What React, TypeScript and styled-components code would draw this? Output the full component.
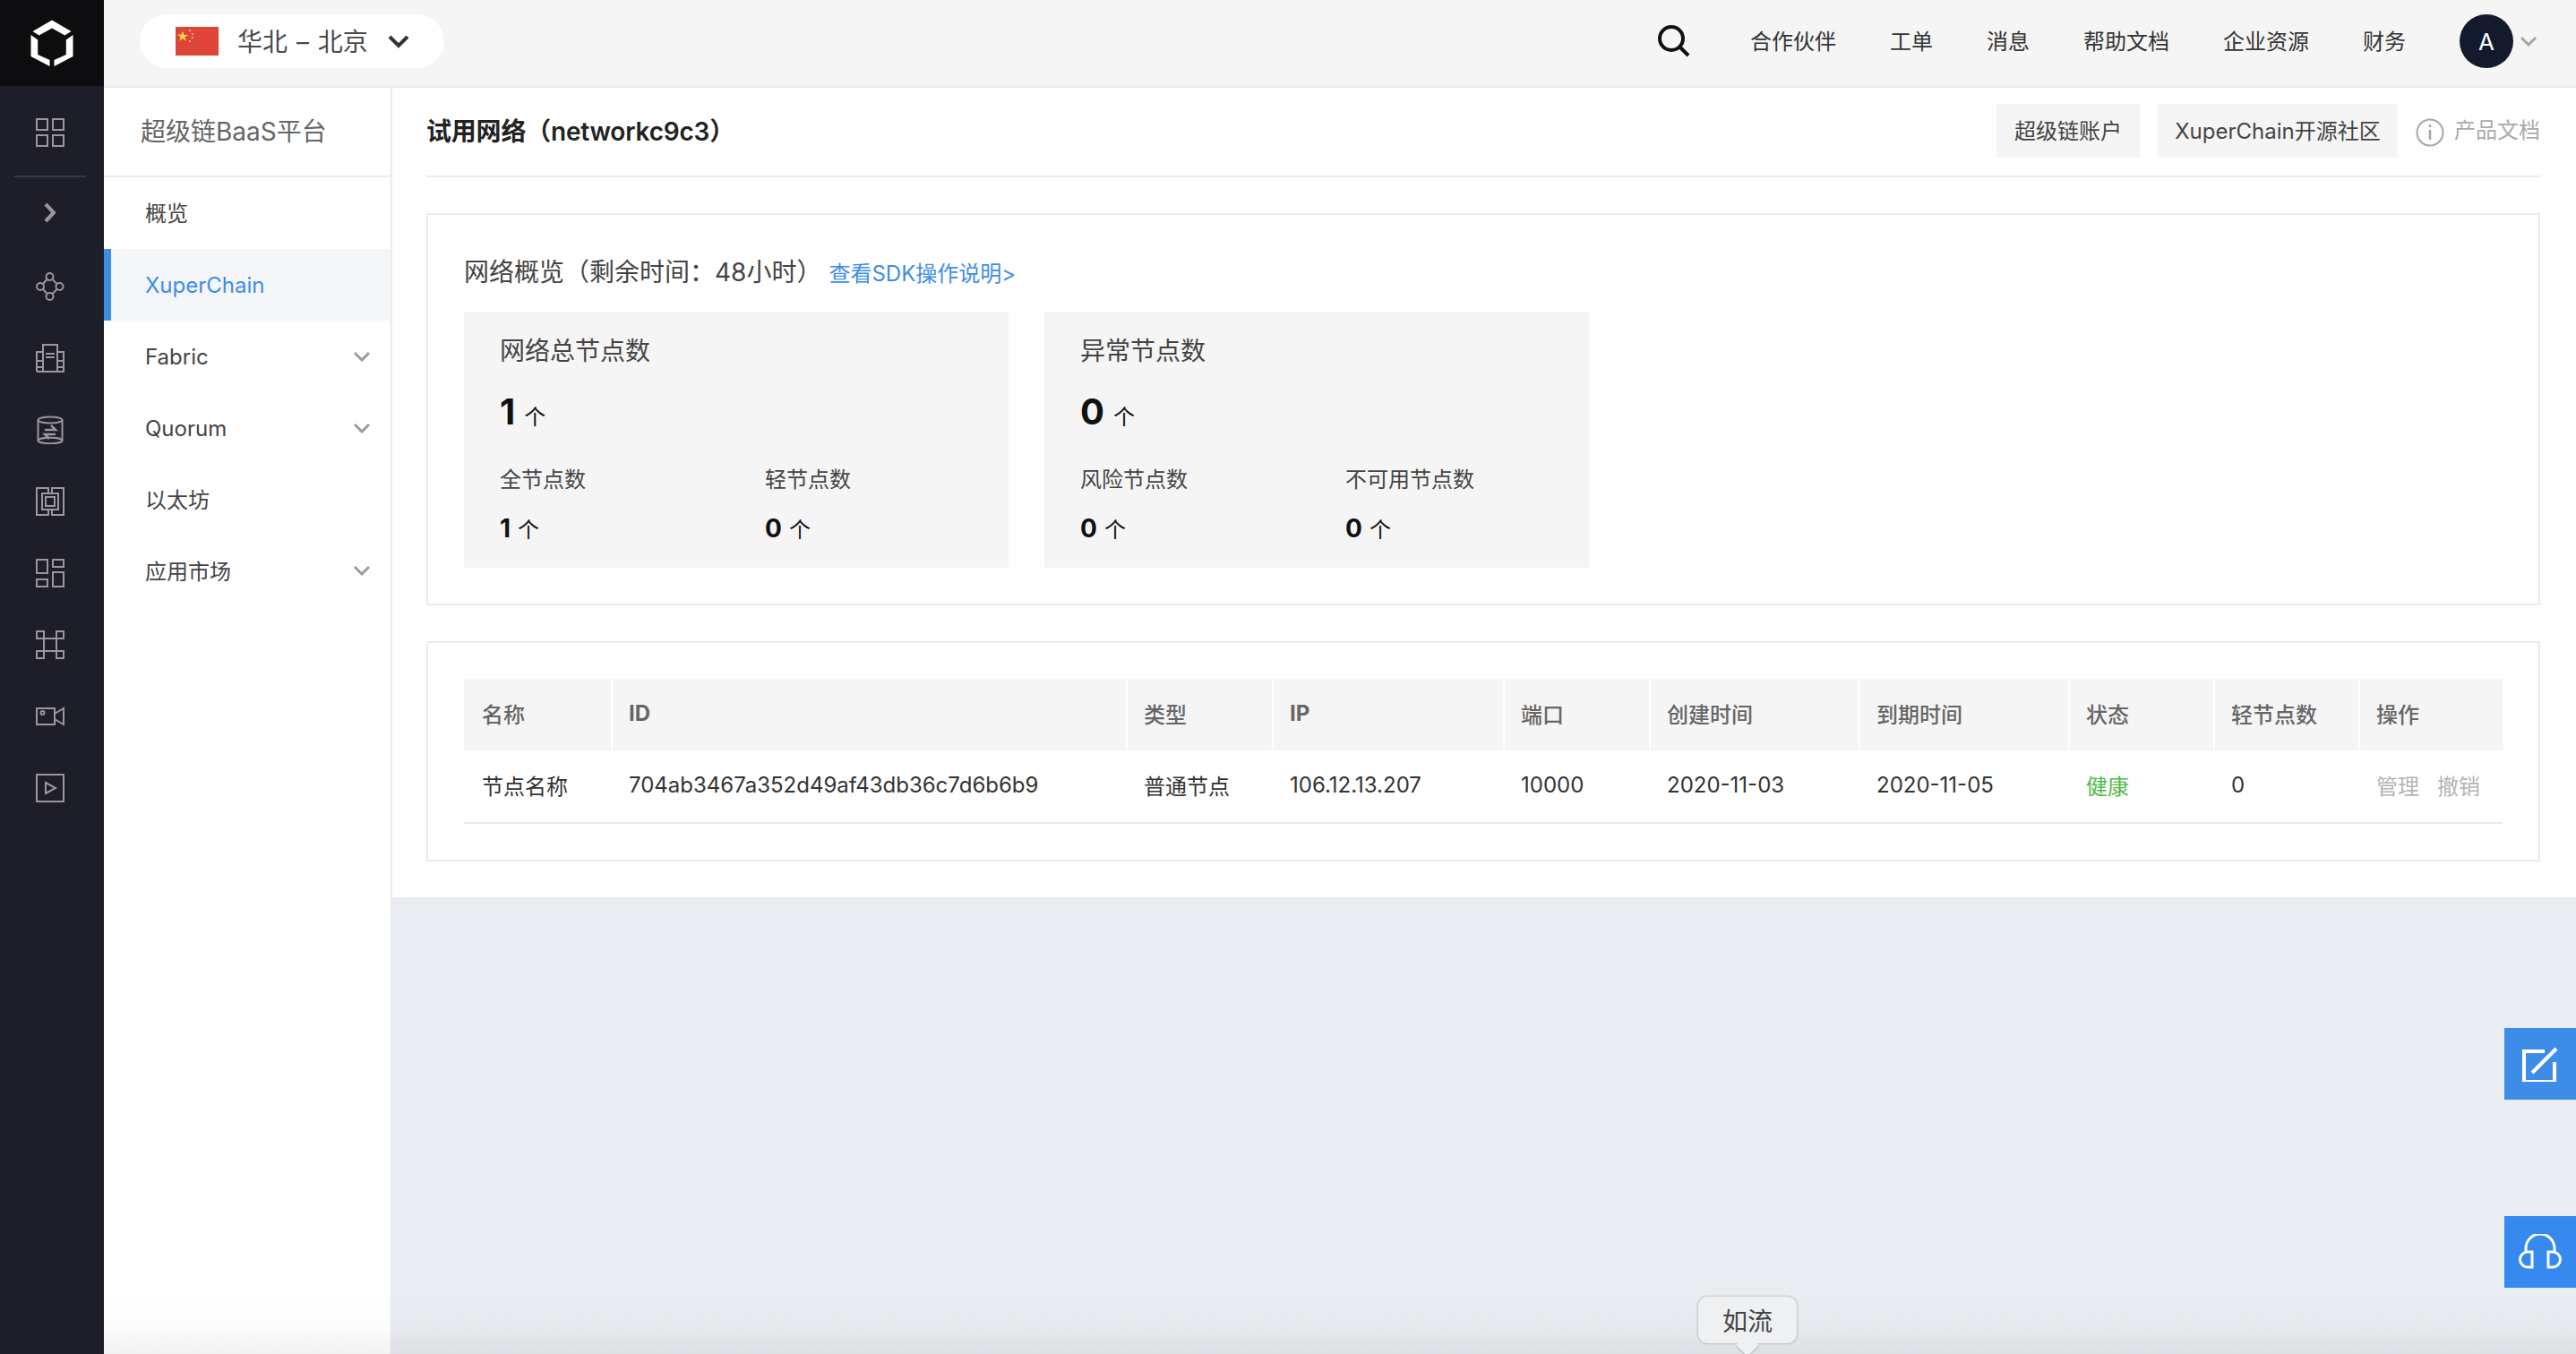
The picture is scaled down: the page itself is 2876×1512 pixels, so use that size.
import React from 'react';
import styled, { createGlobalStyle } from 'styled-components';

const GlobalStyle = createGlobalStyle`
  html, body { margin: 0; padding: 0; background: #e9ecf0; }
  body {
    font-family: Inter, "Noto Sans CJK SC", "Noto Sans", sans-serif;
    color: #333;
  }
  * { box-sizing: border-box; }
`;

const Page = styled.div`
  position: relative;
  display: flex;
  width: 2876px;
  height: 1512px;
  overflow: hidden;
`;

// left icon rail
const Rail = styled.aside`
  width: 116px;
  flex: none;
  background: #1d1e28;
  display: flex;
  flex-direction: column;
`;
const LogoBlock = styled.div`
  height: 96px;
  background: #0d0d0f;
  display: flex;
  align-items: center;
  justify-content: center;
  margin-bottom: 12px;
`;
const RailItem = styled.div`
  height: 80px;
  display: flex;
  align-items: center;
  justify-content: center;
  flex: none;
  padding-right: 4px;
`;
const RailDivider = styled.div`
  height: 2px;
  margin: 8px 20px 0 16px;
  background: #3a3b4a;
  flex: none;
`;
const RailGroup = styled.div`
  padding-top: 2px;
`;
const RailIcon = styled.svg.attrs({ viewBox: '0 0 32 32', width: 32, height: 32 })`
  fill: none;
  stroke: #98989d;
  stroke-width: 2;
`;

const Column = styled.div`
  flex: 1;
  min-width: 0;
  display: flex;
  flex-direction: column;
`;

// top bar
const TopBar = styled.header`
  height: 98px;
  flex: none;
  background: #f5f5f5;
  border-bottom: 2px solid #e8ebef;
  display: flex;
  align-items: center;
  padding: 0 0 4px 40px;
`;
const RegionPill = styled.div`
  width: 340px;
  height: 60px;
  border-radius: 30px;
  background: #fff;
  display: flex;
  align-items: center;
  padding-left: 40px;
  font-size: 28px;
  color: #4a4a4a;
`;
const Flag = styled.svg.attrs({ viewBox: '0 0 48 32', width: 48, height: 32 })`
  flex: none;
  margin-right: 21px;
`;
const RegionName = styled.span`
  width: 168px;
  white-space: nowrap;
  word-spacing: 2px;
  padding-bottom: 3px;
`;
const TopNav = styled.nav`
  margin-left: auto;
  display: flex;
  align-items: center;
  gap: 60px;
  font-size: 24px;
  color: #333;
  span {
    padding-bottom: 3px;
  }
`;
const SearchButton = styled.svg.attrs({ viewBox: '0 0 36 36', width: 36, height: 36 })`
  fill: none;
  stroke: #111;
  stroke-width: 4;
  margin-right: 7px;
`;
const Avatar = styled.div`
  width: 60px;
  height: 60px;
  border-radius: 50%;
  background: #141a2e;
  color: #fff;
  font-size: 26px;
  display: flex;
  align-items: center;
  justify-content: center;
  margin-left: 60px;
  flex: none;
`;
const AvatarCaret = styled.svg.attrs({ viewBox: '0 0 20 12', width: 20, height: 12 })`
  fill: none;
  stroke: #a5a5a5;
  stroke-width: 3;
  margin: 0 43px 0 7px;
  flex: none;
`;

const Body = styled.div`
  flex: 1;
  min-height: 0;
  display: flex;
`;

// second-level menu
const SideMenu = styled.aside`
  width: 322px;
  flex: none;
  background: #fff;
  border-right: 2px solid #ebebeb;
`;
const SideTitle = styled.div`
  height: 100px;
  border-bottom: 2px solid #ebecef;
  padding: 0 0 4px 41px;
  display: flex;
  align-items: center;
  font-size: 28px;
  color: #666;
`;
const SideItem = styled.div<{ $active?: boolean; $cjk?: boolean }>`
  height: 80px;
  display: flex;
  align-items: center;
  justify-content: space-between;
  padding: 0 23px ${(p) => (p.$cjk ? 3 : 0)}px ${(p) => (p.$active ? 38 : 46)}px;
  font-size: 24px;
  color: ${(p) => (p.$active ? '#3d8de8' : '#444')};
  background: ${(p) => (p.$active ? '#f5f6fa' : 'transparent')};
  border-left: ${(p) => (p.$active ? '8px solid #3d8de8' : 'none')};
`;
const Caret = styled.svg.attrs({ viewBox: '0 0 18 12', width: 18, height: 12 })`
  fill: none;
  stroke: #9b9b9b;
  stroke-width: 3;
`;

// main area
const Main = styled.main`
  flex: 1;
  min-width: 0;
  display: flex;
  flex-direction: column;
  background: #e9ecf0;
`;
const Sheet = styled.div`
  background: #fff;
  padding: 0 40px 40px 38px;
`;
const PageHeader = styled.div`
  height: 100px;
  border-bottom: 2px solid #ebebeb;
  display: flex;
  align-items: center;
  padding-bottom: 2px;
`;
const PageTitle = styled.h1`
  margin: 0 0 2px;
  font-size: 28px;
  font-weight: 600;
  letter-spacing: -0.2px;
  color: #222;
`;
const HeaderActions = styled.div`
  margin-left: auto;
  display: flex;
  align-items: center;
  gap: 20px;
`;
const GhostButton = styled.div<{ $width: number }>`
  width: ${(p) => p.$width}px;
  height: 60px;
  padding-bottom: 3px;
  background: #f5f5f5;
  font-size: 24px;
  color: #444;
  display: flex;
  align-items: center;
  justify-content: center;
  white-space: nowrap;
`;
const DocLink = styled.div`
  display: flex;
  align-items: center;
  gap: 11px;
  font-size: 24px;
  color: #aaa;
  line-height: 34px;
`;
const InfoIcon = styled.svg.attrs({ viewBox: '0 0 32 32', width: 32, height: 32 })`
  fill: none;
  stroke: #a6a6a6;
  stroke-width: 2;
  margin-top: 3px;
`;

const Card = styled.section`
  border: 2px solid #ebebeb;
  background: #fff;
  padding: 40px;
  margin-top: 40px;
`;
const OverviewTitle = styled.div`
  display: flex;
  align-items: baseline;
  height: 52px;
  font-size: 28px;
  color: #444;
  padding-top: 2px;
  margin-bottom: 16px;
`;
const DocAnchor = styled.a`
  font-size: 24px;
  color: #3d8de8;
  margin-left: 8px;
`;
const Tiles = styled.div`
  display: flex;
  gap: 40px;
`;
const Tile = styled.div`
  width: 608px;
  height: 286px;
  background: #f5f5f5;
  padding: 24px 40px 0;
`;
const TileTitle = styled.div`
  font-size: 28px;
  line-height: 40px;
  color: #444;
`;
const BigValue = styled.div`
  margin-top: 26px;
  height: 44px;
  display: flex;
  align-items: baseline;
  gap: 10px;
  font-size: 24px;
  color: #111;
  b {
    font-size: 40px;
    line-height: 44px;
    font-weight: 700;
  }
`;
const SubRow = styled.div`
  display: grid;
  grid-template-columns: 296px 1fr;
  margin-top: 37px;
`;
const SubLabel = styled.div`
  font-size: 24px;
  line-height: 34px;
  color: #444;
`;
const SubValue = styled.div`
  margin-top: 20px;
  display: flex;
  align-items: baseline;
  gap: 8px;
  font-size: 24px;
  line-height: 34px;
  color: #111;
  b {
    font-size: 28px;
    font-weight: 700;
  }
`;

// node table
const GRID = '164px 575px 163px 258px 163px 234px 234px 162px 162px 161px';
const TableHead = styled.div`
  display: grid;
  grid-template-columns: ${GRID};
  height: 80px;
`;
const HeadCell = styled.div<{ $latin?: boolean }>`
  background: #f5f5f5;
  border-left: 2px solid #fff;
  padding: 0 0 3px 18px;
  display: flex;
  align-items: center;
  font-size: 24px;
  font-weight: ${(p) => (p.$latin ? 700 : 500)};
  color: #666;
  &:first-child {
    border-left: none;
    padding-left: 20px;
  }
`;
const TableRow = styled.div`
  display: grid;
  grid-template-columns: ${GRID};
  height: 82px;
  border-bottom: 2px solid #ebebeb;
`;
const RowCell = styled.div<{ $color?: string }>`
  padding: 0 0 3px 20px;
  display: flex;
  align-items: center;
  gap: 20px;
  font-size: 24px;
  color: ${(p) => p.$color || '#333'};
  white-space: nowrap;
`;

// things lying over the page
const FloatButton = styled.div<{ $top: number; $color: string }>`
  position: absolute;
  right: 0;
  top: ${(p) => p.$top}px;
  width: 80px;
  height: 80px;
  background: ${(p) => p.$color};
  display: flex;
  align-items: center;
  justify-content: center;
`;
const DockGlow = styled.div`
  position: absolute;
  left: 116px;
  right: 0;
  bottom: 0;
  height: 70px;
  background: linear-gradient(rgba(0, 0, 0, 0), rgba(0, 0, 0, 0.012) 50%, rgba(0, 0, 0, 0.05));
`;
const DockTip = styled.div`
  position: absolute;
  left: 1896px;
  top: 1448px;
  width: 110px;
  height: 52px;
  border-radius: 10px;
  background: #eff0f2;
  box-shadow: 0 0 3px rgba(0, 0, 0, 0.35);
  display: flex;
  align-items: center;
  justify-content: center;
  font-size: 28px;
  color: #444;
  &::after {
    content: '';
    position: absolute;
    left: 46px;
    top: 45px;
    width: 18px;
    height: 18px;
    background: #eff0f2;
    transform: rotate(45deg);
    box-shadow: 1px 1px 2px rgba(0, 0, 0, 0.2);
    z-index: 0;
  }
`;

const Logo = () => (
  <svg width="48" height="52" viewBox="34 20 47 52" fill="#fff">
    <path d="M57.500 20.500 79 33l-7 4.500-14.500-8-14.500 8-7-4.500z" />
    <path d="M34 37l7.700 5.500V59L55 65v7L34 61z" />
    <path d="M81 37l-7.700 5.500V59L60 65v7l21-11z" />
  </svg>
);

const railIcons: React.ReactNode[] = [
  <RailIcon key="network">
    <circle cx="15.500" cy="5" r="4" />
    <circle cx="5" cy="16" r="4" />
    <circle cx="26.500" cy="16" r="4" />
    <circle cx="15.500" cy="27" r="4" />
    <path d="M12.500 8 8 13M18.500 8l5 5M8 19l4.500 5M23.500 19l-5 5" />
  </RailIcon>,
  <RailIcon key="building">
    <path d="M8 31V1h16v30M1 31V9h7M24 9h7v22H1M11 11h10M11 15h10M1 19h7M1 26h7M24 19h7M24 26h7" />
  </RailIcon>,
  <RailIcon key="db">
    <ellipse cx="16" cy="5" rx="13.500" ry="3.500" />
    <ellipse cx="16" cy="28" rx="13.500" ry="3.200" />
    <path d="M2.500 5v23M29.500 5v23" />
    <path d="M10 16h12l-5-5M22 21H10l5 5" strokeWidth="2.500" />
  </RailIcon>,
  <RailIcon key="frame">
    <path d="M14 7V1H1v30h13v-6M18 7V1h13v30H18v-6" />
    <rect x="7" y="7" width="18" height="18" />
    <rect x="11" y="11" width="10" height="10" />
  </RailIcon>,
  <RailIcon key="layout">
    <rect x="1" y="1" width="12" height="15" />
    <rect x="19" y="1" width="12" height="8" />
    <rect x="1" y="23" width="12" height="8" />
    <rect x="19" y="15" width="12" height="16" />
  </RailIcon>,
  <RailIcon key="command">
    <rect x="1" y="1" width="8" height="8" />
    <rect x="23" y="1" width="8" height="8" />
    <rect x="1" y="23" width="8" height="8" />
    <rect x="23" y="23" width="8" height="8" />
    <rect x="9" y="9" width="14" height="14" />
  </RailIcon>,
  <RailIcon key="camera">
    <rect x="1" y="7" width="20" height="18" />
    <path d="M31 7v18l-10-6v-6z" />
    <circle cx="7.500" cy="12" r="2" />
  </RailIcon>,
  <RailIcon key="play">
    <rect x="1" y="1" width="30" height="30" />
    <path d="M11 10v12l11-6z" />
  </RailIcon>,
];

const sideItems = [
  { label: '概览', cjk: true },
  { label: 'XuperChain', active: true },
  { label: 'Fabric', caret: true },
  { label: 'Quorum', caret: true },
  { label: '以太坊', cjk: true },
  { label: '应用市场', caret: true, cjk: true },
];

const topLinks = ['合作伙伴', '工单', '消息', '帮助文档', '企业资源', '财务'];

const tiles = [
  { title: '网络总节点数', total: 1, subs: [['全节点数', 1], ['轻节点数', 0]] },
  { title: '异常节点数', total: 0, subs: [['风险节点数', 0], ['不可用节点数', 0]] },
];

const columns = ['名称', 'ID', '类型', 'IP', '端口', '创建时间', '到期时间', '状态', '轻节点数', '操作'];

const App = () => {
  return (
    <>
      <GlobalStyle />
      <Page>
        <Rail>
          <LogoBlock>
            <Logo />
          </LogoBlock>
          <RailItem>
            <RailIcon>
              <rect x="1" y="1" width="12" height="12" />
              <rect x="19" y="1" width="12" height="12" />
              <rect x="1" y="19" width="12" height="12" />
              <rect x="19" y="19" width="12" height="12" />
            </RailIcon>
          </RailItem>
          <RailDivider />
          <RailItem>
            <RailIcon>
              <path d="M11 6l9 9.500-9 9.500" strokeWidth="4" />
            </RailIcon>
          </RailItem>
          <RailGroup>
            {railIcons.map((icon, i) => (
              <RailItem key={i}>{icon}</RailItem>
            ))}
          </RailGroup>
        </Rail>

        <Column>
          <TopBar>
            <RegionPill>
              <Flag>
                <rect width="48" height="32" fill="#de4437" />
                <path d="M8 4.500l1.500 4.400h4.600l-3.700 2.700 1.400 4.400L8 13l-3.800 2.700 1.400-4.400-3.700-2.700h4.600z" fill="#f7d64a" />
                <circle cx="16" cy="4" r="1" fill="#f7d64a" />
                <circle cx="19" cy="8" r="1" fill="#f7d64a" />
                <circle cx="19" cy="12" r="1" fill="#f7d64a" />
                <circle cx="16" cy="16" r="1" fill="#f7d64a" />
              </Flag>
              <RegionName>华北 – 北京</RegionName>
              <svg width="24" height="16" viewBox="0 0 24 16" fill="none" stroke="#333" strokeWidth="4">
                <path d="M2 3l10 10L22 3" />
              </svg>
            </RegionPill>
            <TopNav>
              <SearchButton>
                <circle cx="15" cy="15" r="13" />
                <path d="M24 24l10 10" />
              </SearchButton>
              {topLinks.map((link) => (
                <span key={link}>{link}</span>
              ))}
            </TopNav>
            <Avatar>A</Avatar>
            <AvatarCaret>
              <path d="M2 2l8 8 8-8" />
            </AvatarCaret>
          </TopBar>

          <Body>
            <SideMenu>
              <SideTitle>超级链BaaS平台</SideTitle>
              <div>
                {sideItems.map((item) => (
                  <SideItem key={item.label} $active={item.active} $cjk={item.cjk}>
                    {item.label}
                    {item.caret && (
                      <Caret>
                        <path d="M1 2l8 8 8-8" />
                      </Caret>
                    )}
                  </SideItem>
                ))}
              </div>
            </SideMenu>

            <Main>
              <Sheet>
                <PageHeader>
                  <PageTitle>试用网络（networkc9c3）</PageTitle>
                  <HeaderActions>
                    <GhostButton $width={160}>超级链账户</GhostButton>
                    <GhostButton $width={268}>XuperChain开源社区</GhostButton>
                    <DocLink>
                      <InfoIcon>
                        <circle cx="16" cy="16" r="14.500" />
                        <path d="M16 13v11M16 7v3" strokeWidth="2.500" />
                      </InfoIcon>
                      产品文档
                    </DocLink>
                  </HeaderActions>
                </PageHeader>

                <Card>
                  <OverviewTitle>
                    网络概览（剩余时间：48小时）
                    <DocAnchor>查看SDK操作说明&gt;</DocAnchor>
                  </OverviewTitle>
                  <Tiles>
                    {tiles.map((tile) => (
                      <Tile key={tile.title}>
                        <TileTitle>{tile.title}</TileTitle>
                        <BigValue>
                          <b>{tile.total}</b>个
                        </BigValue>
                        <SubRow>
                          {tile.subs.map(([label, value]) => (
                            <div key={label}>
                              <SubLabel>{label}</SubLabel>
                              <SubValue>
                                <b>{value}</b>个
                              </SubValue>
                            </div>
                          ))}
                        </SubRow>
                      </Tile>
                    ))}
                  </Tiles>
                </Card>

                <Card>
                  <TableHead>
                    {columns.map((col) => (
                      <HeadCell key={col} $latin={col === 'ID' || col === 'IP'}>
                        {col}
                      </HeadCell>
                    ))}
                  </TableHead>
                  <TableRow>
                    <RowCell>节点名称</RowCell>
                    <RowCell>704ab3467a352d49af43db36c7d6b6b9</RowCell>
                    <RowCell>普通节点</RowCell>
                    <RowCell>106.12.13.207</RowCell>
                    <RowCell>10000</RowCell>
                    <RowCell>2020-11-03</RowCell>
                    <RowCell>2020-11-05</RowCell>
                    <RowCell $color="#52b94a">健康</RowCell>
                    <RowCell>0</RowCell>
                    <RowCell $color="#b5b5b5">
                      <span>管理</span>
                      <span>撤销</span>
                    </RowCell>
                  </TableRow>
                </Card>
              </Sheet>
            </Main>
          </Body>
        </Column>

        <DockGlow />
        <FloatButton $top={1148} $color="#3d8de8">
          <svg width="40" height="40" viewBox="0 0 40 40" fill="none" stroke="#fff" strokeWidth="4">
            <path d="M25 6H2v34h34V18" />
            <path d="M11 30 38 3" />
          </svg>
        </FloatButton>
        <FloatButton $top={1358} $color="#3689ee">
          <svg width="50" height="40" viewBox="0 0 50 40" fill="none" stroke="#fff" strokeWidth="3">
            <path d="M9 20V16a16 16 0 0 1 32 0v4" />
            <path d="M16 20v17H11a8.500 8.500 0 0 1 0-17zM34 20v17h5a8.500 8.500 0 0 0 0-17z" />
          </svg>
        </FloatButton>
        <DockTip>如流</DockTip>
      </Page>
    </>
  );
};

export default App;
